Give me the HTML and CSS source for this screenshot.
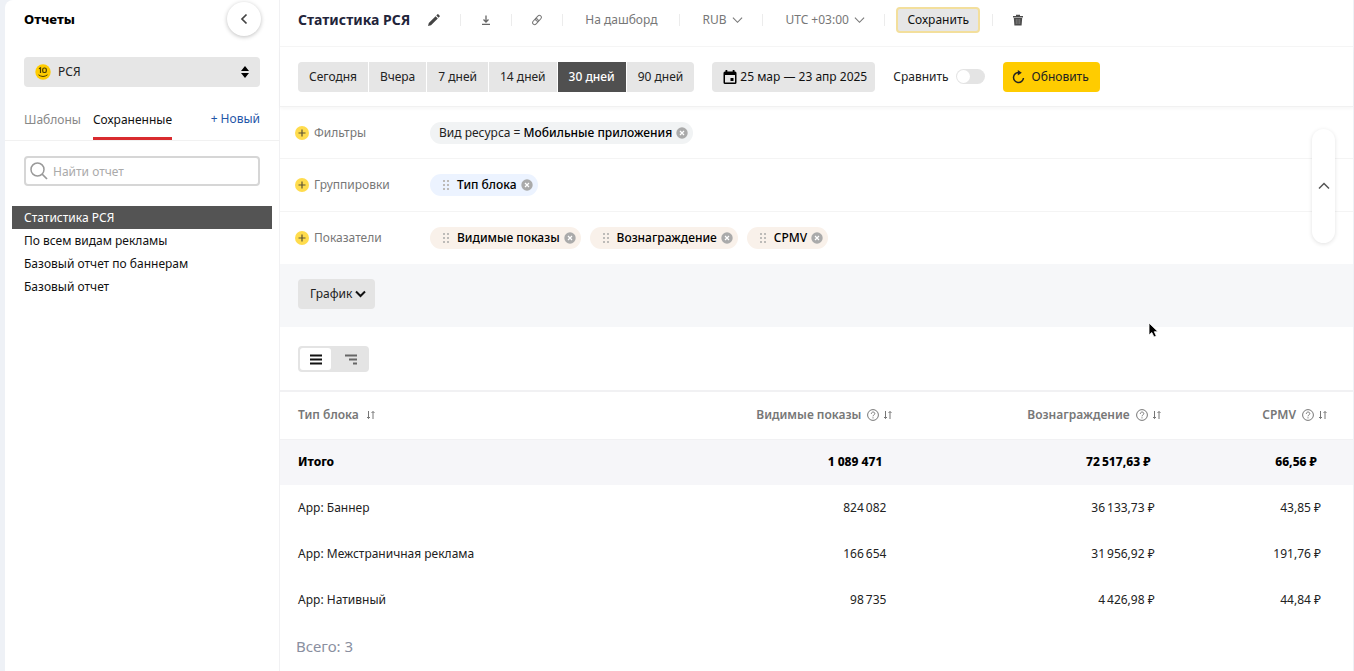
FILE: index.html
```html
<!DOCTYPE html>
<html lang="ru">
<head>
<meta charset="utf-8">
<title>Статистика РСЯ</title>
<link rel="stylesheet" href="styles.css">
</head>
<body>
<svg class="defs" aria-hidden="true">
  <symbol id="chevron" viewBox="0 0 12 8"><path d="M1 1.5 6 6.5 11 1.5" fill="none" stroke="currentColor" stroke-width="1.2"/></symbol>
  <symbol id="plus" viewBox="0 0 14 14"><circle cx="7" cy="7" r="7" fill="#ffdc4d"/><path d="M7 3.5v7M3.5 7h7" stroke="#5c5436" stroke-width="1.2"/></symbol>
  <symbol id="remove" viewBox="0 0 12 12"><circle cx="6" cy="6" r="5.7" fill="currentColor"/><path d="M4 4l4 4M8 4l-4 4" stroke="#fff" stroke-width="1.2"/></symbol>
  <symbol id="grip" viewBox="0 0 6 12"><path d="M0 1h2v2H0zM4 1h2v2H4zM0 5h2v2H0zM4 5h2v2H4zM0 9h2v2H0zM4 9h2v2H4z" fill="#bdbbb8"/></symbol>
  <symbol id="sort" viewBox="0 0 10 10"><path d="M2.500 1v7.500M1 7l1.500 1.500L4 7M7 9V1.500M5.500 3 7 1.500 8.500 3" fill="none" stroke="currentColor"/></symbol>
  <symbol id="help" viewBox="0 0 12 12"><circle cx="6" cy="6" r="5.400" fill="none" stroke="currentColor"/><path d="M4.300 4.800c0-2.300 3.500-2.300 3.500-.2C7.800 5.900 6 5.900 6 7.300M6 8.300v1.100" fill="none" stroke="currentColor"/></symbol>
</svg>

<div class="app">
  <aside class="sidebar">
    <header class="side-head">
      <h2 class="side-title">Отчеты</h2>
      <button class="collapse" type="button" aria-label="Свернуть">
        <svg width="8" height="12" viewBox="0 0 8 12"><path d="M6.500 1.500 2 6l4.500 4.500" fill="none" stroke="#444" stroke-width="1.700"/></svg>
      </button>
    </header>
    <div class="product">
      <svg class="product-logo" width="16" height="16" viewBox="0 0 16 16"><circle cx="8" cy="8" r="7.700" fill="#fc0"/><path d="M4 4.800 5.500 3.800V9" fill="none" stroke="#4a3c00" stroke-width="1.200"/><rect x="7.700" y="4" width="3.600" height="4.500" rx="1.600" fill="none" stroke="#4a3c00" stroke-width="1.200"/><path d="M3.500 10.800q4.500 3.400 9 0" fill="none" stroke="#4a3c00"/></svg>
      <select class="product-select" aria-label="Продукт"><option>РСЯ</option></select>
      <svg class="product-arrows" width="8" height="12" viewBox="0 0 8 12"><path d="M4 0 8 5H0zM4 12 0 7h8z"/></svg>
    </div>
    <nav class="tabs">
      <a class="tab" href="#templates">Шаблоны</a>
      <a class="tab tab-active" href="#saved">Сохраненные</a>
      <a class="tab tab-new" href="#new">+ Новый</a>
    </nav>
    <div class="search">
      <svg class="search-icon" width="18" height="18" viewBox="0 0 18 18"><circle cx="7.500" cy="7.500" r="6.500" fill="none" stroke="#999" stroke-width="1.500"/><path d="m12 12 5 5" stroke="#999" stroke-width="1.700"/></svg>
      <input class="search-input" type="text" placeholder="Найти отчет" aria-label="Найти отчет">
    </div>
    <nav class="reports">
      <a class="report report-active" href="#r1">Статистика РСЯ</a>
      <a class="report" href="#r2">По всем видам рекламы</a>
      <a class="report" href="#r3">Базовый отчет по баннерам</a>
      <a class="report" href="#r4">Базовый отчет</a>
    </nav>
  </aside>

  <main class="main">
    <header class="topbar">
      <h1 class="title">Статистика РСЯ</h1>
      <button class="tool edit" type="button" aria-label="Переименовать"><svg width="12" height="12" viewBox="0 0 12 12"><path d="M0 12l.8-3L7.600 2.200l2.200 2.200L3 11.200zM8.300 1.500 9.500.3q.4-.4.800 0l1.400 1.400q.4.400 0 .8l-1.200 1.200z" fill="#444"/></svg></button>
      <button class="tool" type="button" aria-label="Скачать"><svg width="10" height="12" viewBox="0 0 10 12"><path d="M5 1.500v6.500M2.500 5.500 5 8l2.500-2.500M1 10.300h8" fill="none" stroke="#666" stroke-width="1.300"/></svg></button>
      <button class="tool" type="button" aria-label="Ссылка"><svg width="10" height="12" viewBox="0 0 10 12"><g transform="rotate(42 5 6)" fill="none" stroke="#777"><rect x="3" y="0.500" width="4" height="6.500" rx="2"/><rect x="3" y="5" width="4" height="6.500" rx="2"/></g></svg></button>
      <a class="tool tool-wide" href="#dashboard">На дашборд</a>
      <span class="tool tool-wide tool-select"><select class="plain-select" aria-label="Валюта"><option>RUB</option></select><svg width="11" height="8"><use href="#chevron"/></svg></span>
      <span class="tool tool-wide tool-select"><select class="plain-select" aria-label="Часовой пояс"><option>UTC +03:00</option></select><svg width="11" height="8"><use href="#chevron"/></svg></span>
      <span class="tool tool-save"><button class="save" type="button">Сохранить</button></span>
      <button class="tool tool-last" type="button" aria-label="Удалить"><svg width="10" height="12" viewBox="0 0 10 12"><path d="M0 2h3V.8h4V2h3v1.500H0zM.8 4h8.400l-.6 7.500H1.400z" fill="#4c4c4c"/><path d="M3.300 5v5M5 5v5M6.700 5v5" stroke="#999" stroke-width=".6"/></svg></button>
    </header>

    <section class="period">
      <div class="segments">
        <button class="segment" type="button">Сегодня</button>
        <button class="segment" type="button">Вчера</button>
        <button class="segment" type="button">7 дней</button>
        <button class="segment" type="button">14 дней</button>
        <button class="segment segment-active" type="button">30 дней</button>
        <button class="segment" type="button">90 дней</button>
      </div>
      <button class="dates" type="button">
        <svg width="14" height="14" viewBox="0 0 14 14"><path fill-rule="evenodd" d="M2.500 0h1.800v1.500h5.400V0h1.800v1.500H12q1.500 0 1.500 1.500v9.500q0 1.500-1.500 1.500H2Q.5 14 .5 12.500V3Q.5 1.500 2 1.500h.5zM2 5v7.500h10V5zm5.500 3h3v3h-3z"/></svg>
        25 мар — 23 апр 2025
      </button>
      <label class="compare">Сравнить <input class="switch" type="checkbox"></label>
      <button class="refresh" type="button">
        <svg width="13" height="14" viewBox="0 0 13 14"><path d="M7 2.500A5 5 0 1 0 11.500 8" fill="none" stroke="#222" stroke-width="1.500"/><path d="M5.800 0v5.400L9.800 2.700z" fill="#222"/></svg>
        Обновить
      </button>
    </section>

    <section class="params">
      <div class="param">
        <button class="add" type="button"><svg width="14" height="14"><use href="#plus"/></svg>Фильтры</button>
        <div class="chips">
          <span class="chip chip-filter">Вид ресурса = <b class="chip-value">Мобильные приложения</b><button class="chip-x" type="button" aria-label="Удалить"><svg width="12" height="12"><use href="#remove"/></svg></button></span>
        </div>
      </div>
      <div class="param">
        <button class="add" type="button"><svg width="14" height="14"><use href="#plus"/></svg>Группировки</button>
        <div class="chips">
          <span class="chip chip-group"><svg class="grip" width="6" height="12"><use href="#grip"/></svg><b class="chip-value">Тип блока</b><button class="chip-x" type="button" aria-label="Удалить"><svg width="12" height="12"><use href="#remove"/></svg></button></span>
        </div>
      </div>
      <div class="param">
        <button class="add" type="button"><svg width="14" height="14"><use href="#plus"/></svg>Показатели</button>
        <div class="chips">
          <span class="chip chip-metric"><svg class="grip" width="6" height="12"><use href="#grip"/></svg><b class="chip-value">Видимые показы</b><button class="chip-x" type="button" aria-label="Удалить"><svg width="12" height="12"><use href="#remove"/></svg></button></span>
          <span class="chip chip-metric"><svg class="grip" width="6" height="12"><use href="#grip"/></svg><b class="chip-value">Вознаграждение</b><button class="chip-x" type="button" aria-label="Удалить"><svg width="12" height="12"><use href="#remove"/></svg></button></span>
          <span class="chip chip-metric"><svg class="grip" width="6" height="12"><use href="#grip"/></svg><b class="chip-value">CPMV</b><button class="chip-x" type="button" aria-label="Удалить"><svg width="12" height="12"><use href="#remove"/></svg></button></span>
        </div>
      </div>
      <button class="fold" type="button" aria-label="Свернуть параметры"><svg width="12" height="8" viewBox="0 0 12 8"><path d="M1 6.500 6 1.500l5 5" fill="none" stroke="#555" stroke-width="1.500"/></svg></button>
    </section>

    <section class="chart-bar">
      <button class="chart-button" type="button">График <svg width="11" height="8" viewBox="0 0 11 8"><path d="M1 1.500 5.500 6 10 1.500" fill="none" stroke="#111" stroke-width="2"/></svg></button>
      <svg class="cursor" width="11" height="16" viewBox="0 0 11 16"><path d="M1 1v12l2.800-2.500L6 15l2.300-1-2-4.300H10z" fill="#000" stroke="#fff" stroke-width=".8"/></svg>
    </section>

    <section class="view-bar">
      <div class="views">
        <button class="view view-active" type="button" aria-label="Список"><svg width="12" height="11" viewBox="0 0 12 11"><path d="M0 1.500h12M0 5.500h12M0 9.500h12" stroke="#111" stroke-width="2"/></svg></button>
        <button class="view view-tree" type="button" aria-label="Дерево"><svg width="12" height="11" viewBox="0 0 12 11"><path d="M0 1.500h12M4 5.500h8M8 9.500h4" stroke="#666" stroke-width="1.800"/></svg></button>
      </div>
    </section>

    <table class="data">
      <colgroup><col class="col-name"><col class="col-metric"><col class="col-metric"><col></colgroup>
      <thead>
        <tr>
          <th><span class="head">Тип блока <svg class="head-sort" width="10" height="10"><use href="#sort"/></svg></span></th>
          <th><span class="head">Видимые показы <svg class="head-help" width="12" height="12"><use href="#help"/></svg><svg width="10" height="10"><use href="#sort"/></svg></span></th>
          <th><span class="head">Вознаграждение <svg class="head-help" width="12" height="12"><use href="#help"/></svg><svg width="10" height="10"><use href="#sort"/></svg></span></th>
          <th><span class="head">CPMV <svg class="head-help" width="12" height="12"><use href="#help"/></svg><svg width="10" height="10"><use href="#sort"/></svg></span></th>
        </tr>
      </thead>
      <tbody>
        <tr class="total"><td>Итого</td><td>1&#160;089&#160;471</td><td>72&#8201;517,63 ₽</td><td>66,56 ₽</td></tr>
        <tr><td>App: Баннер</td><td>824&#8201;082</td><td>36&#8201;133,73 ₽</td><td>43,85 ₽</td></tr>
        <tr><td>App: Межстраничная реклама</td><td>166&#8201;654</td><td>31&#8201;956,92 ₽</td><td>191,76 ₽</td></tr>
        <tr><td>App: Нативный</td><td>98&#8201;735</td><td>4&#8201;426,98 ₽</td><td>44,84 ₽</td></tr>
      </tbody>
    </table>
    <p class="count">Всего: 3</p>
  </main>
</div>
</body>
</html>
```
FILE: styles.css
```css
* { box-sizing: border-box; }
body {
  margin: 0;
  background: #eef1f6;
  color: #222;
  font: 12px/16px "Noto Sans", "Open Sans", sans-serif;
}
button, select, input { font: inherit; color: inherit; }
button { border: 0; padding: 0; background: none; cursor: pointer; white-space: nowrap; }
a { color: inherit; text-decoration: none; }
svg { display: block; flex: none; }
.defs { position: absolute; width: 0; height: 0; }

.app { display: flex; min-height: 100vh; padding: 0 1px 0 5px; }

/* Sidebar */
.sidebar {
  flex: none;
  width: 275px;
  background: #fff;
  border-right: 1px solid #f1f1f3;
  border-top-left-radius: 8px;
}
.side-head { display: flex; align-items: center; justify-content: space-between; height: 37px; padding: 0 18px 0 19px; }
.side-title { margin: 0; font-size: 13px; font-weight: 800; color: #000; }
.collapse {
  display: grid;
  place-items: center;
  width: 34px;
  height: 34px;
  border-radius: 50%;
  background: #fff;
  box-shadow: 0 1px 4px rgba(0, 0, 0, .25);
}
.product { position: relative; margin: 20px 19px 0; }
.product-select {
  display: block;
  width: 100%;
  height: 30px;
  padding: 0 34px;
  border: 0;
  border-radius: 4px;
  background: #e6e6e6;
  appearance: none;
}
.product-logo { position: absolute; left: 11px; top: 7px; }
.product-arrows { position: absolute; right: 11px; top: 9px; pointer-events: none; }
.tabs { display: flex; gap: 12px; height: 54px; padding: 0 19px; border-bottom: 1px solid #f1f1f1; align-items: flex-end; }
.tab { padding-bottom: 12px; color: #888; }
.tab-active { color: #111; border-bottom: 3px solid #d92b2f; padding-bottom: 9px; }
.tab-new { margin-left: auto; color: #1f56a8; padding-bottom: 13px; }
.search { position: relative; margin: 15px 19px 0; }
.search-icon { position: absolute; left: 6px; top: 6px; }
.search-input { display: block; width: 100%; height: 30px; padding: 0 10px 0 27px; border: 2px solid #d6d6d6; border-radius: 4px; background: #fff; outline: 0; }
.search-input::placeholder { color: #aaa; opacity: 1; }
.reports { display: flex; flex-direction: column; margin: 20px 7px 0; }
.report { padding: 4px 12px 3px; color: #111; }
.report-active { background: #545454; color: #fff; }

/* Main column */
.main { flex: 1; min-width: 0; background: #fff; }
.topbar { display: flex; align-items: center; height: 47px; padding: 0 18px 6px; border-bottom: 1px solid #f5f5f5; }
.title { margin: 0; font-size: 14px; font-weight: 700; color: #22243a; white-space: nowrap; }
.tool { display: flex; align-items: center; height: 12px; padding: 0 20px; border-right: 1px solid #ececec; color: #777; white-space: nowrap; }
.tool-wide { padding: 0 22px; }
.tool-select { gap: 5px; padding-right: 19px; }
.edit { padding-left: 18px; }
.plain-select { padding: 0; border: 0; background: none; appearance: none; }
.tool-save { padding: 0 12px 0 11px; }
.save { height: 26px; padding: 0 9px; border: 2px solid #f3df9c; border-radius: 4px; background: #e6e6e6; color: #111; }
.tool-last { border-right: 0; }

.period { display: flex; align-items: center; height: 60px; padding: 0 18px; border-bottom: 1px solid #f1f1f1; box-shadow: 0 2px 3px rgba(0, 0, 0, .03); }
.segments { display: flex; gap: 1px; overflow: hidden; border-radius: 4px; }
.segment { height: 30px; padding: 0 11px; background: #e6e6e6; }
.segment-active { background: #505050; color: #fff; font-weight: 500; }
.dates { display: flex; align-items: center; gap: 3px; height: 30px; margin-left: 18px; padding: 0 8px 0 11px; border-radius: 4px; background: #e6e6e6; color: #111; }
.compare { display: flex; align-items: center; gap: 7px; margin-left: 18px; }
.switch { position: relative; width: 29px; height: 15px; margin: 0; border-radius: 8px; background: #e4e4e4; appearance: none; }
.switch::before { content: ""; position: absolute; left: 1px; top: 1px; width: 13px; height: 13px; border-radius: 50%; background: #fff; }
.refresh { display: flex; align-items: center; gap: 7px; height: 30px; margin-left: 18px; padding: 0 11px 0 9px; border-radius: 4px; background: #fc0; }

.params { position: relative; }
.param { display: flex; align-items: center; height: 52px; padding: 0 15px; border-bottom: 1px solid #f4f4f4; }
.param:nth-child(2) { height: 53px; }
.param:nth-child(3) { border-bottom: 0; }
.add { display: flex; align-items: center; gap: 5px; width: 135px; color: #777; }
.chips { display: flex; gap: 9px; }
.chip { display: flex; align-items: center; height: 22px; padding: 0 5px 0 9px; border-radius: 11px; white-space: pre; }
.chip-filter { background: #f1f3f4; }
.chip-group { background: #ecf3ff; }
.chip-metric { background: #f9f1ea; }
.chip-value { font-weight: 500; color: #000; }
.grip { margin: 0 8px 0 4px; }
.chip-x { margin-left: 4px; color: #aaa; }
.fold {
  position: absolute;
  right: 18px;
  top: 22px;
  display: grid;
  place-items: center;
  width: 23px;
  height: 114px;
  border-radius: 12px;
  background: #fff;
  box-shadow: 0 1px 4px rgba(0, 0, 0, .12);
}

.chart-bar { position: relative; height: 63px; padding: 15px 18px; background: #f6f7f9; }
.chart-button { display: flex; align-items: center; gap: 3px; height: 30px; padding: 0 9px 0 12px; border-radius: 4px; background: #e4e4e4; }
.cursor { position: absolute; left: 868px; top: 58px; z-index: 1; }
.view-bar { padding: 19px 18px; height: 63px; }
.views { display: inline-flex; padding: 2px; border-radius: 4px; background: #e4e4e4; }
.view { display: grid; place-items: center; width: 36px; height: 22px; border-radius: 3px; }
.view-active { width: 31px; background: #fff; }
.view-tree { padding-left: 4px; }

/* Results */
.data { width: 100%; table-layout: fixed; border-collapse: collapse; }
.col-name { width: 34.5%; }
.col-metric { width: 25%; }
.data th, .data td { height: 46px; padding: 0 32px 0 18px; text-align: right; }
.data th { height: 48px; padding-right: 25px; border-top: 2px solid #f1f1f3; border-bottom: 1px solid #f1f1f3; font-weight: 600; color: #777; }
.data th:first-child, .data td:first-child { padding-right: 0; text-align: left; }
.head { display: inline-flex; align-items: center; }
.head-help { margin: 0 4px 0 6px; }
.head-sort { margin-left: 7px; }
.data .total td { padding-right: 36px; background: #f6f6f9; color: #000; font-weight: 800; }
.count { margin: 0; padding: 13px 16px; font-size: 15px; line-height: 20px; color: #8a8fa0; }
```
